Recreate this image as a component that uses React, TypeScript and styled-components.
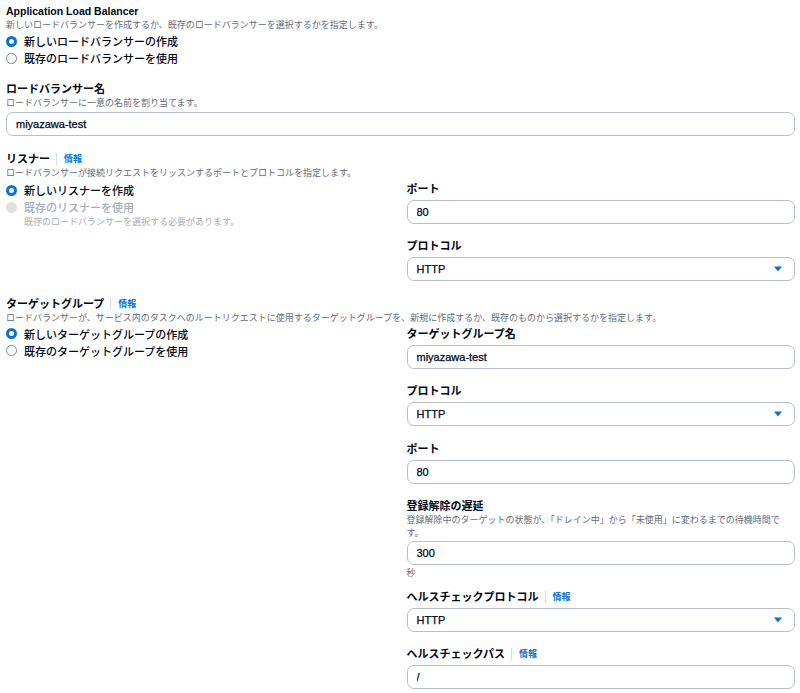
import React from 'react'
import styled, { createGlobalStyle, css } from 'styled-components'

const FONT = `"Liberation Sans", "Noto Sans CJK JP", sans-serif`

const GlobalStyle = createGlobalStyle`
  html, body {
    margin: 0;
    padding: 0;
    background: #ffffff;
  }
  body {
    font-family: ${FONT};
    color: #000716;
  }
  * {
    box-sizing: border-box;
  }
`

const Page = styled.div`
  display: flex;
  flex-direction: column;
  gap: 14.5px;
  padding: 2.5px 5px 0 6px;
  width: 800px;
`

const Section = styled.section`
  display: flex;
  flex-direction: column;
`

const HeaderRow = styled.div`
  display: flex;
  align-items: center;
  height: 16px;
`

const Heading = styled.span<{ $latin?: boolean }>`
  font-size: ${({ $latin }) => ($latin ? '10.5px' : '11px')};
  font-weight: 700;
  line-height: 16px;
  color: #000716;
`

const InfoDivider = styled.span`
  width: 1px;
  height: 12px;
  background: #d5dbe1;
  margin: 0 7px 0 6px;
`

const InfoLink = styled.a`
  font-size: 9px;
  font-weight: 700;
  color: #0972d3;
  text-decoration: none;
  line-height: 14px;
`

const Description = styled.div`
  font-size: 9px;
  line-height: 13px;
  color: #5f6b7a;
`

const RadioGroup = styled.div<{ $offset?: number }>`
  display: flex;
  flex-direction: column;
  padding-top: ${({ $offset }) => $offset ?? 1}px;
`

const RadioRow = styled.label<{ $disabled?: boolean }>`
  display: flex;
  align-items: center;
  gap: 7px;
  height: 17px;
  font-size: 11px;
  font-weight: 500;
  color: ${({ $disabled }) => ($disabled ? '#a4adb8' : '#000716')};
`

type DotState = 'checked' | 'unchecked' | 'disabled'

const RadioDot = styled.span<{ $state: DotState }>`
  flex: none;
  width: 11px;
  height: 11px;
  border-radius: 50%;
  ${({ $state }) =>
    $state === 'checked'
      ? css`
          background: #ffffff;
          border: 3.5px solid #0972d3;
        `
      : $state === 'disabled'
      ? css`
          background: #dde1e6;
          border: none;
        `
      : css`
          background: #ffffff;
          border: 1px solid #7d8998;
        `}
`

const RadioHint = styled.div`
  font-size: 9px;
  line-height: 11px;
  margin: 1px 0 0 18px;
  color: #a4adb8;
`

const Columns = styled.div`
  display: grid;
  grid-template-columns: 1fr 1fr;
  column-gap: 12px;
`

const FieldStack = styled.div`
  display: flex;
  flex-direction: column;
  gap: 15.5px;
  padding-top: 2px;
`

const Field = styled.div`
  display: flex;
  flex-direction: column;
`

const FieldLabelRow = styled.div`
  display: flex;
  align-items: center;
  height: 14px;
`

const FieldLabel = styled.span`
  font-size: 11px;
  font-weight: 700;
  line-height: 14px;
  color: #000716;
`

const FieldDesc = styled.div`
  font-size: 9px;
  line-height: 13px;
  color: #5f6b7a;
  margin: 1px 0 -3px;
`

const FieldHint = styled.div`
  font-size: 9px;
  line-height: 11px;
  color: #5f6b7a;
  margin: 3px 0 -5px;
`

const controlBox = css<{ $gap?: number }>`
  height: 24px;
  width: 100%;
  margin-top: ${({ $gap }) => ($gap ?? 4)}px;
  border: 1px solid #b8bfc8;
  border-radius: 7px;
  background: #ffffff;
  padding: 0 12px 0 9px;
  font-family: ${FONT};
  font-size: 11px;
  color: #000716;
  -webkit-text-stroke: 0.25px #000716;
`

const TextInput = styled.input<{ $gap?: number }>`
  ${controlBox}
  outline: none;
`

const SelectBox = styled.div<{ $gap?: number }>`
  ${controlBox}
  display: flex;
  align-items: center;
  justify-content: space-between;
`

const Caret = () => (
  <svg width="8" height="6" viewBox="0 0 8 6">
    <polygon points="0,0.5 8,0.5 4,5.5" fill="#0972d3" />
  </svg>
)

const Info = () => (
  <>
    <InfoDivider />
    <InfoLink href="#">情報</InfoLink>
  </>
)

function LabeledInput({ label, value, info }: { label: string; value: string; info?: boolean }) {
  return (
    <Field>
      <FieldLabelRow>
        <FieldLabel>{label}</FieldLabel>
        {info && <Info />}
      </FieldLabelRow>
      <TextInput defaultValue={value} />
    </Field>
  )
}

function LabeledSelect({ label, value, info }: { label: string; value: string; info?: boolean }) {
  return (
    <Field>
      <FieldLabelRow>
        <FieldLabel>{label}</FieldLabel>
        {info && <Info />}
      </FieldLabelRow>
      <SelectBox>
        <span>{value}</span>
        <Caret />
      </SelectBox>
    </Field>
  )
}

export default function App() {
  return (
    <>
      <GlobalStyle />
      <Page>
        <Section>
          <HeaderRow>
            <Heading $latin>Application Load Balancer</Heading>
          </HeaderRow>
          <Description>新しいロードバランサーを作成するか、既存のロードバランサーを選択するかを指定します。</Description>
          <RadioGroup>
            <RadioRow>
              <RadioDot $state="checked" />
              新しいロードバランサーの作成
            </RadioRow>
            <RadioRow>
              <RadioDot $state="unchecked" />
              既存のロードバランサーを使用
            </RadioRow>
          </RadioGroup>
        </Section>

        <Section>
          <HeaderRow>
            <Heading>ロードバランサー名</Heading>
          </HeaderRow>
          <Description>ロードバランサーに一意の名前を割り当てます。</Description>
          <TextInput $gap={2} defaultValue="miyazawa-test" />
        </Section>

        <Section>
          <HeaderRow>
            <Heading>リスナー</Heading>
            <Info />
          </HeaderRow>
          <Description>ロードバランサーが接続リクエストをリッスンするポートとプロトコルを指定します。</Description>
          <Columns>
            <RadioGroup $offset={2}>
              <RadioRow>
                <RadioDot $state="checked" />
                新しいリスナーを作成
              </RadioRow>
              <RadioRow $disabled>
                <RadioDot $state="disabled" />
                既存のリスナーを使用
              </RadioRow>
              <RadioHint>既存のロードバランサーを選択する必要があります。</RadioHint>
            </RadioGroup>
            <FieldStack>
              <LabeledInput label="ポート" value="80" />
              <LabeledSelect label="プロトコル" value="HTTP" />
            </FieldStack>
          </Columns>
        </Section>

        <Section>
          <HeaderRow>
            <Heading>ターゲットグループ</Heading>
            <Info />
          </HeaderRow>
          <Description>
            ロードバランサーが、サービス内のタスクへのルートリクエストに使用するターゲットグループを、新規に作成するか、既存のものから選択するかを指定します。
          </Description>
          <Columns>
            <RadioGroup $offset={0.5}>
              <RadioRow>
                <RadioDot $state="checked" />
                新しいターゲットグループの作成
              </RadioRow>
              <RadioRow>
                <RadioDot $state="unchecked" />
                既存のターゲットグループを使用
              </RadioRow>
            </RadioGroup>
            <FieldStack>
              <LabeledInput label="ターゲットグループ名" value="miyazawa-test" />
              <LabeledSelect label="プロトコル" value="HTTP" />
              <LabeledInput label="ポート" value="80" />
              <Field>
                <FieldLabelRow>
                  <FieldLabel>登録解除の遅延</FieldLabel>
                </FieldLabelRow>
                <FieldDesc>登録解除中のターゲットの状態が、「ドレイン中」から「未使用」に変わるまでの待機時間です。</FieldDesc>
                <TextInput defaultValue="300" />
                <FieldHint>秒</FieldHint>
              </Field>
              <LabeledSelect label="ヘルスチェックプロトコル" value="HTTP" info />
              <LabeledInput label="ヘルスチェックパス" value="/" info />
            </FieldStack>
          </Columns>
        </Section>
      </Page>
    </>
  )
}
